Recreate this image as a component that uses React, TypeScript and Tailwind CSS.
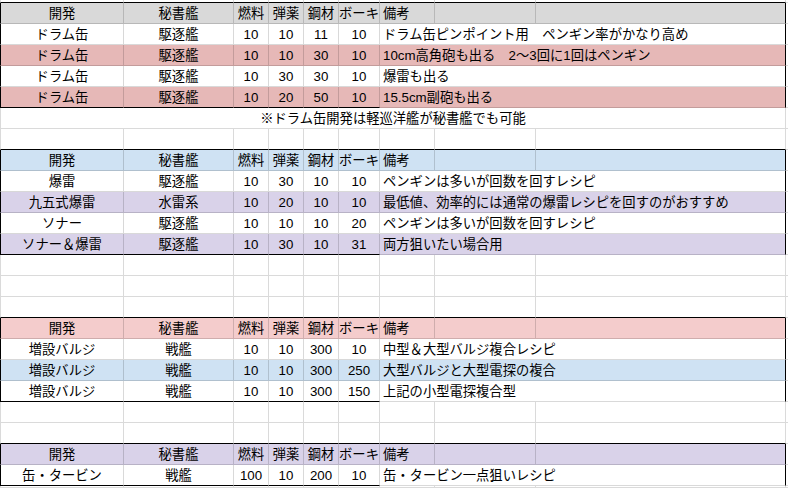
import React from "react";

const FONT =
  "font-['Liberation_Sans','Noto_Sans_CJK_JP',sans-serif] text-[13.3px] leading-none text-black";

type Tone = "white" | "gray" | "pink" | "blue" | "lav" | "rose";

const BG: Record<Tone, string> = {
  white: "bg-white",
  gray: "bg-[#d9d9d9]",
  pink: "bg-[#e6b8b7]",
  blue: "bg-[#cfe2f3]",
  lav: "bg-[#d9d2e9]",
  rose: "bg-[#f4cccc]",
};

// column widths incl. the 1px line on their right (A also holds the left line)
const COLS = [
  "w-[124px]",
  "w-[110px]",
  "w-[35px]",
  "w-[35px]",
  "w-[35px]",
  "w-[41px]",
  "w-[55px]",
  "w-[101px]",
  "w-[250px]",
];

const HEAD = ["開発", "秘書艦", "燃料", "弾薬", "鋼材", "ボーキ", "備考", "", ""];

type Recipe = { tone: Tone; cells: string[] };

const tables: { head: Tone; rows: Recipe[] }[] = [
  {
    head: "gray",
    rows: [
      { tone: "white", cells: ["ドラム缶", "駆逐艦", "10", "10", "11", "10", "ドラム缶ピンポイント用　ペンギン率がかなり高め"] },
      { tone: "pink", cells: ["ドラム缶", "駆逐艦", "10", "10", "30", "10", "10cm高角砲も出る　2～3回に1回はペンギン"] },
      { tone: "white", cells: ["ドラム缶", "駆逐艦", "10", "30", "30", "10", "爆雷も出る"] },
      { tone: "pink", cells: ["ドラム缶", "駆逐艦", "10", "20", "50", "10", "15.5cm副砲も出る"] },
    ],
  },
  {
    head: "blue",
    rows: [
      { tone: "white", cells: ["爆雷", "駆逐艦", "10", "30", "10", "10", "ペンギンは多いが回数を回すレシピ"] },
      { tone: "lav", cells: ["九五式爆雷", "水雷系", "10", "20", "10", "10", "最低値、効率的には通常の爆雷レシピを回すのがおすすめ"] },
      { tone: "white", cells: ["ソナー", "駆逐艦", "10", "10", "10", "20", "ペンギンは多いが回数を回すレシピ"] },
      { tone: "lav", cells: ["ソナー＆爆雷", "駆逐艦", "10", "30", "10", "31", "両方狙いたい場合用"] },
    ],
  },
  {
    head: "rose",
    rows: [
      { tone: "white", cells: ["増設バルジ", "戦艦", "10", "10", "300", "10", "中型＆大型バルジ複合レシピ"] },
      { tone: "blue", cells: ["増設バルジ", "戦艦", "10", "10", "300", "250", "大型バルジと大型電探の複合"] },
      { tone: "white", cells: ["増設バルジ", "戦艦", "10", "10", "300", "150", "上記の小型電探複合型"] },
    ],
  },
  {
    head: "lav",
    rows: [
      { tone: "white", cells: ["缶・タービン", "戦艦", "100", "10", "200", "10", "缶・タービン一点狙いレシピ"] },
    ],
  },
];

const Spill = () => <div className="flex-1 border-b border-[#dadada] bg-white" />;

const EmptyRow = ({ h = "h-[21px]", topOfTable = false }: { h?: string; topOfTable?: boolean }) => (
  <div className={`flex ${h}`}>
    {COLS.map((w, i) => (
      <div
        key={i}
        className={`${w} shrink-0 border-r border-b border-[#dadada] bg-white ${i === 0 ? "border-l" : ""} ${
          topOfTable ? "border-b-black" : ""
        }`}
      />
    ))}
    <Spill />
  </div>
);

const HeaderRow = ({ tone }: { tone: Tone }) => (
  <div className="flex h-[21px]">
    {COLS.map((w, i) => (
      <div
        key={i}
        className={`${w} ${BG[tone]} shrink-0 flex items-center pt-px border-r border-b border-black/15 ${
          i === 0 ? "border-l border-l-black" : ""
        } ${i === 8 ? "border-r-black" : ""} ${i === 6 ? "justify-start pl-[3px]" : "justify-center"}`}
      >
        {HEAD[i]}
      </div>
    ))}
    <Spill />
  </div>
);

const DataRow = ({ row, last }: { row: Recipe; last: boolean }) => (
  <div className="flex h-[21px]">
    {COLS.slice(0, 6).map((w, i) => (
      <div
        key={i}
        className={`${w} ${BG[row.tone]} shrink-0 flex items-center justify-center pt-px border-r border-b border-black/15 ${
          i === 0 ? "border-l border-l-black" : ""
        } ${last ? "border-b-black" : ""}`}
      >
        {row.cells[i]}
      </div>
    ))}
    <div
      className={`w-[406px] ${BG[row.tone]} shrink-0 flex items-center pl-[3px] pt-px whitespace-nowrap border-r border-r-black border-b border-b-black/15 ${
        last ? "border-b-black" : ""
      }`}
    >
      {row.cells[6]}
    </div>
    <Spill />
  </div>
);

const Table = ({ head, rows }: { head: Tone; rows: Recipe[] }) => (
  <>
    <HeaderRow tone={head} />
    {rows.map((r, i) => (
      <DataRow key={i} row={r} last={i === rows.length - 1} />
    ))}
  </>
);

export default function App() {
  return (
    <div className={`w-[788px] h-[488px] overflow-hidden bg-white flex flex-col ${FONT}`}>
      <EmptyRow h="h-[3px]" topOfTable />
      <Table {...tables[0]} />
      <div className="flex h-[21px]">
        <div className="w-[786px] shrink-0 flex items-center justify-center pt-px border-l border-r border-b border-[#dadada] bg-white">
          ※ドラム缶開発は軽巡洋艦が秘書艦でも可能
        </div>
        <Spill />
      </div>
      <EmptyRow topOfTable />
      <Table {...tables[1]} />
      <EmptyRow />
      <EmptyRow />
      <EmptyRow topOfTable />
      <Table {...tables[2]} />
      <EmptyRow />
      <EmptyRow topOfTable />
      <Table {...tables[3]} />
      <EmptyRow h="h-[2px]" />
    </div>
  );
}
